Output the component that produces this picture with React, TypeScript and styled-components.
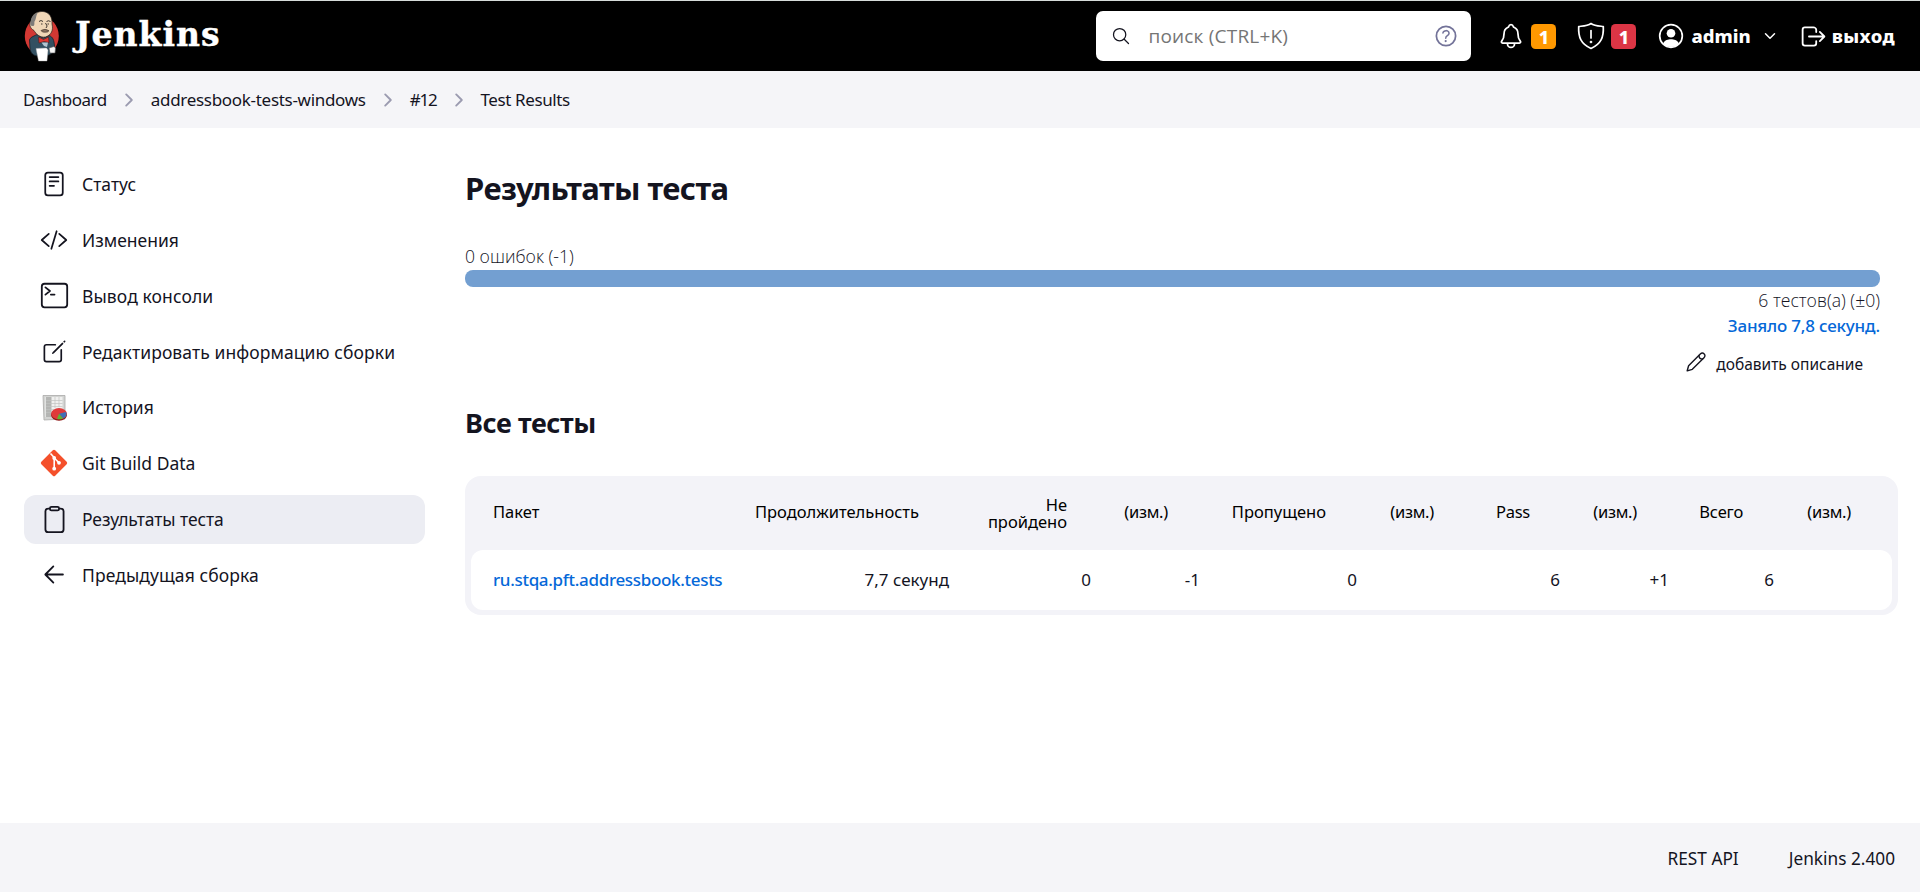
import React from 'react';
import styled, { createGlobalStyle } from 'styled-components';
import {
  IoChevronDownOutline,
  IoChevronForwardOutline,
  IoClipboardOutline,
  IoCodeSlashOutline,
  IoCreateOutline,
  IoHelpCircleOutline,
  IoLogOutOutline,
  IoNotificationsOutline,
  IoReaderOutline,
  IoSearchOutline,
  IoTerminalOutline,
} from 'react-icons/io5';

const GlobalStyle = createGlobalStyle`
  * { box-sizing: border-box; }
  body {
    margin: 0;
    background: #fff;
    color: #14141f;
    font-family: "Noto Sans", "Open Sans", sans-serif;
    font-size: 17px;
    line-height: 24px;
  }
  svg { display: block; flex: none; }
`;

const Page = styled.div`
  display: flex;
  flex-direction: column;
  height: 892px;
  overflow: hidden;
`;

/* Run of text; $ls is the tracking in px. */
const Label = styled.span<{ $ls?: number }>`
  letter-spacing: ${(p) => p.$ls ?? 0}px;
  white-space: nowrap;
`;

/* ---------- header ---------- */

const Header = styled.header`
  display: flex;
  align-items: center;
  height: 71px;
  flex: none;
  padding: 0 25px 0 23px;
  background: #000;
  border-top: 1px solid #d6dcda;
  color: #fff;
`;

const Brand = styled.a`
  display: flex;
  align-items: center;
  gap: 15px;
  margin-right: auto;
`;

const BrandName = styled.span`
  font-family: "DejaVu Serif", serif;
  font-weight: 700;
  font-size: 33px;
  line-height: 44px;
  letter-spacing: 1px;
  margin-top: -2px;
  -webkit-text-stroke: 0.4px #fff;
`;

const SearchBox = styled.div`
  display: flex;
  align-items: center;
  width: 375px;
  height: 50px;
  padding: 0 11px 0 15px;
  background: #fff;
  border-radius: 7px;
  color: #14141f;
`;

const Placeholder = styled(Label)`
  flex: 1;
  margin-left: 17px;
  color: #757575;
  font-size: 19px;
  letter-spacing: 0.2px;
  font-family: "Open Sans", sans-serif;
`;

const HeaderLink = styled.a<{ $left: number; $gap: number }>`
  display: flex;
  align-items: center;
  gap: ${(p) => p.$gap}px;
  margin-left: ${(p) => p.$left}px;
  font-weight: 800;
  font-size: 18.5px;
`;

const Badge = styled.span<{ $color: string }>`
  width: 25px;
  height: 25px;
  border-radius: 4.5px;
  background: ${(p) => p.$color};
  font-size: 18px;
  line-height: 26px;
  text-align: center;
`;

/* ---------- breadcrumbs ---------- */

const Breadcrumbs = styled.nav`
  display: flex;
  align-items: center;
  height: 57px;
  flex: none;
  padding: 1px 23px 0;
  background: #f5f5f8;
`;

const Separator = styled.span`
  display: flex;
  justify-content: center;
  width: 44px;
  color: #9b9bb0;
`;

/* ---------- body ---------- */

const Body = styled.div`
  display: flex;
  flex: 1;
`;

const Sidebar = styled.aside`
  width: 425px;
  padding: 32px 0 0 24px;
  display: flex;
  flex-direction: column;
  gap: 6.85px;
  font-size: 17.5px;
`;

const Task = styled.a<{ $active?: boolean }>`
  display: flex;
  align-items: center;
  gap: 14px;
  height: 49px;
  padding: 0 0 1px 16px;
  border-radius: 12px;
  background: ${(p) => (p.$active ? '#ecedf3' : 'transparent')};
`;

const TaskIcon = styled.span`
  display: flex;
  align-items: center;
  justify-content: center;
  width: 28px;
  height: 28px;
`;

const Main = styled.main`
  display: flex;
  flex-direction: column;
  width: 1433px;
  margin-left: 40px;
  padding-top: 38px;
`;

const Title = styled.h1`
  margin: 0;
  font-size: 31px;
  line-height: 44px;
  font-weight: 700;
  letter-spacing: -0.57px;
`;

const Subtitle = styled.h2`
  margin: 27px 0 0;
  font-size: 27px;
  line-height: 38px;
  font-weight: 700;
  letter-spacing: -0.4px;
`;

const Summary = styled.section`
  display: flex;
  flex-direction: column;
  width: 1415px;
  margin-top: 34px;
`;

const Light = styled(Label)`
  font-family: "Open Sans", sans-serif;
  font-weight: 350;
  font-size: 17.6px;
`;

const Bar = styled.div`
  height: 17px;
  margin: 2px 0 0;
  border-radius: 8px;
  background: #739fd1;
`;

const Aside = styled.div`
  display: flex;
  flex-direction: column;
  align-items: flex-end;
  line-height: 26px;
`;

const Link = styled(Label)`
  color: #0568d8;
  font-weight: 500;
`;

const EditLink = styled.a`
  display: flex;
  align-items: center;
  gap: 10px;
  margin: 12px 17px 0 0;
  font-size: 15.5px;

  svg { margin-bottom: 5px; }
`;

const Table = styled.div`
  display: flex;
  flex-direction: column;
  height: 139px;
  margin-top: 34px;
  padding: 0 6px 5px;
  background: #f3f3f8;
  border-radius: 16px;
`;

const Row = styled.div`
  display: grid;
  grid-template-columns: 254px 224px 142px 109px 157px 108px 95px 109px 105px 108px;
  align-items: center;
`;

const HeadRow = styled(Row)`
  height: 74px;
  padding-bottom: 3px;
  color: #000;
  font-size: 16.5px;
  line-height: 17px;
`;

const DataRow = styled(Row)`
  height: 60px;
  background: #fff;
  border-radius: 12px;
`;

const Cell = styled.span<{ $right?: number; $first?: boolean; $ls?: number; $top?: number }>`
  padding-top: ${(p) => p.$top ?? 0}px;
  padding-left: ${(p) => (p.$first ? 22 : 0)}px;
  padding-right: ${(p) => p.$right ?? 0}px;
  text-align: ${(p) => (p.$first ? 'left' : 'right')};
  letter-spacing: ${(p) => p.$ls ?? 0}px;
  white-space: pre;
`;

const Footer = styled.footer`
  display: flex;
  align-items: center;
  justify-content: flex-end;
  gap: 50px;
  height: 69px;
  flex: none;
  padding: 2px 25px 0 0;
  background: #f5f5f8;
  font-size: 17.25px;
`;

/* ---------- drawings ---------- */

const ButlerLogo = () => (
  <svg width="37" height="52" viewBox="0 0 37 52">
    <ellipse cx="18.8" cy="26" rx="17" ry="19" fill="#d33833" />
    <path d="M6.500 30 C7 27.500 10 26.500 14 24.500 L20 28 L26 25.500 C30 27 31 30 31.500 36 L32 41 L26 45 L14 46 C9 45 7.500 42 7 38Z" fill="#335061" stroke="#16222b" strokeWidth="0.8" />
    <path d="M8 11 C9 3.500 15 1.300 20 1.500 C26 2 29.500 7 29 14 C30.500 20 28.500 25 22.500 27 C17 28 13 24 11 20.500 C6.500 18 6 14 8 11Z" fill="#f0d6b7" stroke="#2a2420" strokeWidth="0.7" />
    <path d="M7.500 12 C8.500 6 11 3.800 15 2.500 C12.500 6 13.500 9 11.500 11.500 C11 13 12 14.500 10.500 16 C7.500 16.500 6.500 14 7.500 12Z" fill="#7d7b79" />
    <path d="M16 11.500 q2 -2 4 0 M23.500 11.500 q2 -1.500 4 0 M18 14 h1.500 M24.500 14 h1.500 M22.500 13 q3 3.500 0.500 5" fill="none" stroke="#2a2420" strokeWidth="0.9" />
    <path d="M18 20.500 q4 -2.500 8 0.200 q-1 1.800 -4 1.500 q-3 0.500 -4 -1.700Z" fill="#8a7260" stroke="#3b2c25" strokeWidth="0.6" />
    <path d="M15.500 27 L20.500 29.500 L25.500 27 L26 32.500 L21 31.500 L16 33Z" fill="#e03631" stroke="#5e1715" strokeWidth="0.6" />
    <path d="M18.500 32.500 L25 32.500 L24 37 L21 36Z" fill="#b4c6d2" />
    <path d="M13 38.500 L23.500 38 L25 40 L24 51 L15.500 51Z" fill="#fff" stroke="#aaa" strokeWidth="0.4" />
    <path d="M26 38 L31 36.500 L32.500 38 L32 43 L27 43Z" fill="#f4f4f4" stroke="#555" strokeWidth="0.6" />
  </svg>
);

const ShieldIcon = () => (
  <svg width="28" height="28" viewBox="0 0 28 28" fill="none" stroke="#fff" strokeWidth="1.7" strokeLinejoin="round" strokeLinecap="round">
    <path d="M14 1.500 C10.500 4 6 4 1.700 4.500 C1.200 15.500 4 22 14 26.500 C24 22 26.800 15.500 26.300 4.500 C22 4 17.500 4 14 1.500Z" />
    <path d="M14 8.500 V16" />
    <circle cx="14" cy="20" r="0.5" />
  </svg>
);

const UserIcon = () => (
  <svg width="26" height="26" viewBox="0 0 26 26">
    <circle cx="13" cy="13" r="11.300" fill="none" stroke="#fff" strokeWidth="1.7" />
    <circle cx="13" cy="10.200" r="4.300" fill="#fff" />
    <path d="M5 20.500 C7 17 10 16.300 13 16.300 C16 16.300 19 17 21 20.500 C17 25.300 9 25.300 5 20.500Z" fill="#fff" />
  </svg>
);

const PencilIcon = () => (
  <svg width="20" height="20" viewBox="0 0 20 20" fill="none" stroke="#14141f" strokeWidth="1.400" strokeLinejoin="round" strokeLinecap="round">
    <path d="M1.200 18.800 L2.600 13.800 L14.300 2 C15.500 0.800 17.200 0.900 18.200 1.900 C19.200 2.900 19.200 4.500 18 5.700 L6.300 17.300 Z" />
    <path d="M13 3.400 C13 5.500 14.500 7 16.600 7" />
  </svg>
);

const BackIcon = () => (
  <svg width="27" height="27" viewBox="0 0 512 512" fill="none" stroke="currentColor" strokeWidth="34" strokeLinejoin="round" strokeLinecap="round">
    <path d="M234 410L82 256l152-154M96 256h320" />
  </svg>
);

const HistoryIcon = () => (
  <svg width="28" height="28" viewBox="0 0 28 28">
    <path d="M3 2.500 H25 V26 L4 27 Z" fill="#d3d4d2" stroke="#a9aaa8" strokeWidth="0.8" />
    <rect x="5.500" y="4" width="17" height="20" fill="#f0f0ef" />
    <rect x="6" y="4" width="5.500" height="20" fill="#b4b5b3" />
    <path d="M6 7.500h16.500M6 10.500h16.500M6 13.500h16.500M6 16.500h8M6 19.500h6M15 4v11M19 4v10" stroke="#c2c3c1" strokeWidth="0.7" />
    <ellipse cx="19" cy="22" rx="8" ry="5.700" fill="#8f1717" />
    <ellipse cx="19" cy="20.700" rx="7.800" ry="5.600" fill="#e03a3a" />
    <path d="M19 20.700 L26 19 C27.500 22 25.500 24.500 23 25.500Z" fill="#3f6fb5" />
    <path d="M19 20.700 L23 25.500 C21 26.500 18.500 26.500 17 26Z" fill="#5fb531" />
  </svg>
);

const GitIcon = () => (
  <svg width="28" height="28" viewBox="0 0 28 28">
    <rect x="4.200" y="4.200" width="19.600" height="19.600" rx="1.700" transform="rotate(45 14 14)" fill="#f4502b" />
    <path d="M10.500 4.500 L14.200 8.500 V20 M14.200 9 L18.500 13.300" stroke="#fff" strokeWidth="1.600" fill="none" />
    <circle cx="14.200" cy="9" r="1.900" fill="#fff" />
    <circle cx="14.200" cy="19.700" r="1.900" fill="#fff" />
    <circle cx="19" cy="13.800" r="1.900" fill="#fff" />
  </svg>
);

/* ---------- data ---------- */

const crumbs = [
  { text: 'Dashboard', ls: -0.47 },
  { text: 'addressbook-tests-windows', ls: -0.3 },
  { text: '#12', ls: -1.2 },
  { text: 'Test Results', ls: -0.4 },
];

const tasks = [
  { text: 'Статус', icon: <IoReaderOutline size={28} /> },
  { text: 'Изменения', icon: <IoCodeSlashOutline size={28} /> },
  { text: 'Вывод консоли', icon: <IoTerminalOutline size={29} />, ls: 0.1 },
  { text: 'Редактировать информацию сборки', icon: <IoCreateOutline size={27} />, ls: 0.09 },
  { text: 'История', icon: <HistoryIcon /> },
  { text: 'Git Build Data', icon: <GitIcon /> },
  { text: 'Результаты теста', icon: <IoClipboardOutline size={29} />, ls: -0.08, active: true },
  { text: 'Предыдущая сборка', icon: <BackIcon />, ls: 0.1 },
];

const columns = [
  { head: 'Пакет', value: 'ru.stqa.pft.addressbook.tests', right: 0 },
  { head: 'Продолжительность', value: '7,7 секунд', right: 30 },
  { head: 'Не\nпройдено', value: '0', right: 24, top: 3 },
  { head: '(изм.)', value: '-1', right: 32, ls: -0.25 },
  { head: 'Пропущено', value: '0', right: 31 },
  { head: '(изм.)', value: '', right: 31, ls: -0.25 },
  { head: 'Pass', value: '6', right: 30, ls: -0.25 },
  { head: '(изм.)', value: '+1', right: 32, ls: -0.25 },
  { head: 'Всего', value: '6', right: 31, ls: -0.2 },
  { head: '(изм.)', value: '', right: 31, ls: -0.25 },
];

export default function App() {
  return (
    <Page>
      <GlobalStyle />
      <Header>
        <Brand>
          <ButlerLogo />
          <BrandName>Jenkins</BrandName>
        </Brand>
        <SearchBox>
          <IoSearchOutline size={20} />
          <Placeholder>поиск (CTRL+K)</Placeholder>
          <IoHelpCircleOutline size={28} color="#737399" />
        </SearchBox>
        <HeaderLink $left={26} $gap={6}>
          <IoNotificationsOutline size={28} />
          <Badge $color="#ff9800">1</Badge>
        </HeaderLink>
        <HeaderLink $left={21} $gap={6}>
          <ShieldIcon />
          <Badge $color="#dc3545">1</Badge>
        </HeaderLink>
        <HeaderLink $left={22} $gap={7}>
          <UserIcon />
          <Label>admin</Label>
        </HeaderLink>
        <HeaderLink $left={11} $gap={0}>
          <IoChevronDownOutline size={16} />
        </HeaderLink>
        <HeaderLink $left={21} $gap={4}>
          <IoLogOutOutline size={29} />
          <Label $ls={0.4}>выход</Label>
        </HeaderLink>
      </Header>

      <Breadcrumbs>
        {crumbs.map((c, i) => (
          <React.Fragment key={c.text}>
            {i > 0 && (
              <Separator>
                <IoChevronForwardOutline size={20} />
              </Separator>
            )}
            <Label $ls={c.ls}>{c.text}</Label>
          </React.Fragment>
        ))}
      </Breadcrumbs>

      <Body>
        <Sidebar>
          {tasks.map((t) => (
            <Task key={t.text} $active={t.active}>
              <TaskIcon>{t.icon}</TaskIcon>
              <Label $ls={t.ls}>{t.text}</Label>
            </Task>
          ))}
        </Sidebar>

        <Main>
          <Title>Результаты теста</Title>
          <Summary>
            <Light>0 ошибок (-1)</Light>
            <Bar />
            <Aside>
              <Light>6 тестов(а) (±0)</Light>
              <Link $ls={-0.2}>Заняло 7,8 секунд.</Link>
              <EditLink>
                <PencilIcon />
                <Label>добавить описание</Label>
              </EditLink>
            </Aside>
          </Summary>
          <Subtitle>Все тесты</Subtitle>
          <Table>
            <HeadRow>
              {columns.map((c, i) => (
                <Cell key={i} $first={i === 0} $right={c.right} $ls={c.ls} $top={c.top}>
                  {c.head}
                </Cell>
              ))}
            </HeadRow>
            <DataRow>
              {columns.map((c, i) => (
                <Cell key={i} $first={i === 0}>
                  {i === 0 ? <Link $ls={-0.32}>{c.value}</Link> : c.value}
                </Cell>
              ))}
            </DataRow>
          </Table>
        </Main>
      </Body>

      <Footer>
        <Label>REST API</Label>
        <Label>Jenkins 2.400</Label>
      </Footer>
    </Page>
  );
}
